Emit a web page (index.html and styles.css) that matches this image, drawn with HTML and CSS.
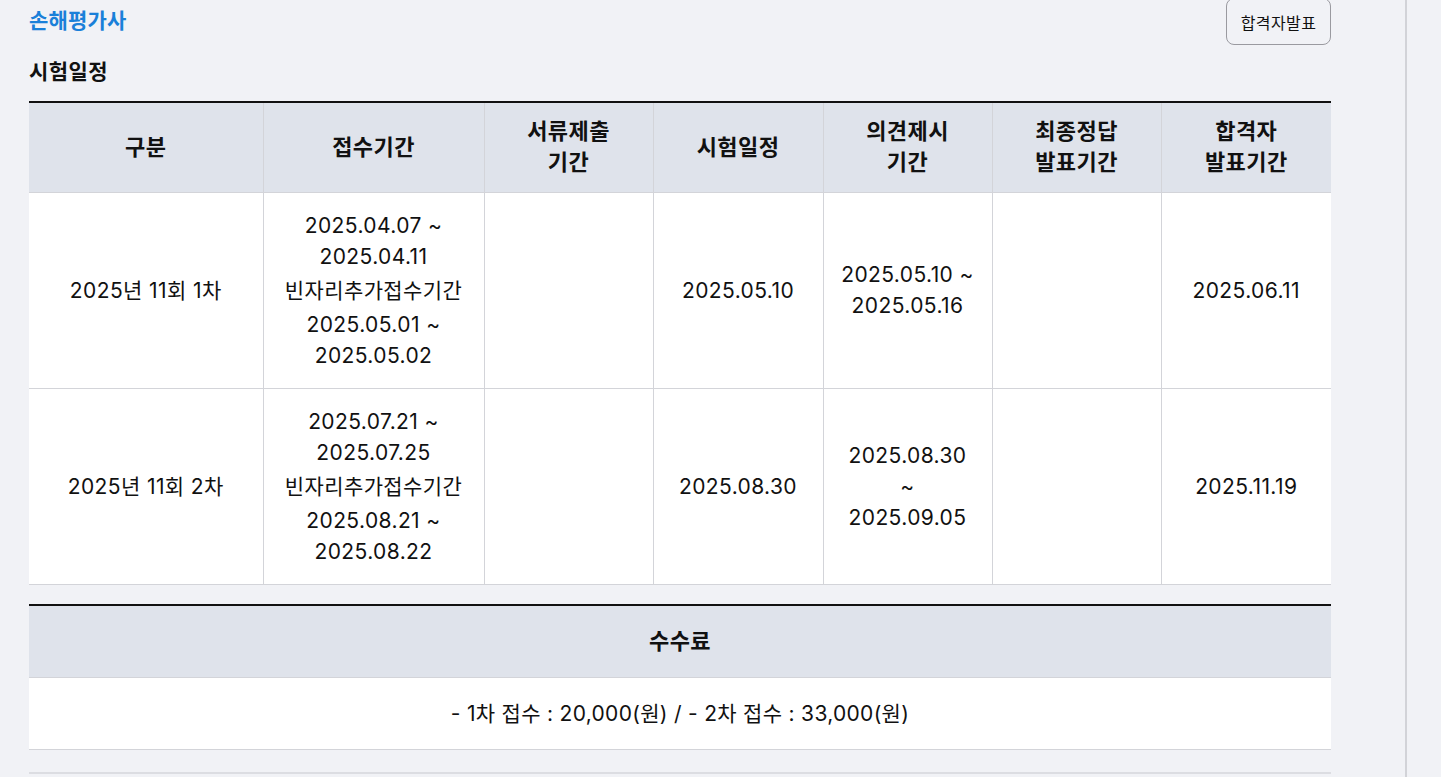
FILE: index.html
```html
<!DOCTYPE html>
<html lang="ko">
<head>
<meta charset="utf-8">
<title>손해평가사 시험일정</title>
<link rel="stylesheet" href="styles.css">
</head>
<body>
<div class="page">
  <main class="main">
    <div class="top">
      <h1 class="title">손해평가사</h1>
      <button class="btn" type="button">합격자발표</button>
    </div>
    <h2 class="subtitle">시험일정</h2>
    <table class="sched">
      <colgroup>
        <col style="width:234px"><col style="width:221px"><col style="width:169px"><col style="width:170px"><col style="width:169px"><col style="width:169px"><col style="width:170px">
      </colgroup>
      <thead>
        <tr>
          <th>구분</th>
          <th>접수기간</th>
          <th>서류제출<br>기간</th>
          <th>시험일정</th>
          <th>의견제시<br>기간</th>
          <th>최종정답<br>발표기간</th>
          <th>합격자<br>발표기간</th>
        </tr>
      </thead>
      <tbody>
        <tr>
          <td>2025년 11회 1차</td>
          <td>
            <div class="blk">2025.04.07 ~<br>2025.04.11</div>
            <div class="blk">빈자리추가접수기간</div>
            <div class="blk">2025.05.01 ~<br>2025.05.02</div>
          </td>
          <td></td>
          <td>2025.05.10</td>
          <td>2025.05.10 ~<br>2025.05.16</td>
          <td></td>
          <td>2025.06.11</td>
        </tr>
        <tr>
          <td>2025년 11회 2차</td>
          <td>
            <div class="blk">2025.07.21 ~<br>2025.07.25</div>
            <div class="blk">빈자리추가접수기간</div>
            <div class="blk">2025.08.21 ~<br>2025.08.22</div>
          </td>
          <td></td>
          <td>2025.08.30</td>
          <td>2025.08.30<br>~<br>2025.09.05</td>
          <td></td>
          <td>2025.11.19</td>
        </tr>
      </tbody>
    </table>
    <table class="fee">
      <thead>
        <tr><th>수수료</th></tr>
      </thead>
      <tbody>
        <tr><td>- 1차 접수 : 20,000(원) / - 2차 접수 : 33,000(원)</td></tr>
      </tbody>
    </table>
    <div class="next"></div>
  </main>
  <aside class="side"></aside>
</div>
</body>
</html>
```

FILE: styles.css
```css
html, body {
  margin: 0;
  padding: 0;
  background: #f1f2f6;
  font-family: Inter, "Noto Sans CJK KR", "Noto Sans", sans-serif;
  color: #111;
}
.page {
  display: flex;
  height: 777px;
  overflow: hidden;
}
.main {
  width: 1302px;
  margin-left: 29px;
  flex: none;
}
.side {
  margin-left: 74px;
  border-left: 2px solid #d2d3d8;
  flex: 1;
}
.top {
  display: flex;
  justify-content: space-between;
  align-items: flex-start;
  height: 46px;
}
.title {
  margin: 7px 0 0;
  font-size: 21px;
  font-weight: 700;
  color: #1a80d9;
  line-height: 28px;
  letter-spacing: 0.2px;
}
.btn {
  margin-top: -2px;
  width: 105px;
  height: 47px;
  border: 1px solid #9a9aa0;
  border-radius: 8px;
  background: #f1f2f6;
  font-family: Inter, "Noto Sans CJK KR", sans-serif;
  font-size: 16px;
  letter-spacing: 0.4px;
  color: #111;
  padding: 0;
}
.subtitle {
  margin: 12px 0 0;
  font-size: 21px;
  font-weight: 700;
  line-height: 28px;
  letter-spacing: 0.4px;
  height: 43px;
}
table {
  width: 1302px;
  border-collapse: collapse;
  table-layout: fixed;
  background: #fff;
}
th, td {
  text-align: center;
  vertical-align: middle;
  padding: 0 6px;
}
th {
  background: #dfe3eb;
  font-size: 22px;
  font-weight: 700;
  line-height: 31px;
  letter-spacing: 0.4px;
}
td {
  font-size: 21px;
  line-height: 31px;
  letter-spacing: 0.4px;
}
.sched {
  border-top: 2px solid #111;
}
.sched th, .sched td {
  border: 1px solid #d3d4d9;
}
.sched thead tr { height: 90px; }
.sched tbody tr { height: 196px; }
.sched tr > :first-child { border-left: none; }
.sched tr > :last-child { border-right: none; }
.sched thead th { border-top: none; }
.blk + .blk { margin-top: 3px; }
.fee {
  margin-top: 19px;
  border-top: 2px solid #111;
}
.fee th { height: 71px; border-bottom: 1px solid #d3d4d9; }
.fee td { height: 71px; border-bottom: 1px solid #d3d4d9; letter-spacing: 0.3px; }
.next {
  margin-top: 22px;
  border-top: 2px solid #dcdde2;
}
```
